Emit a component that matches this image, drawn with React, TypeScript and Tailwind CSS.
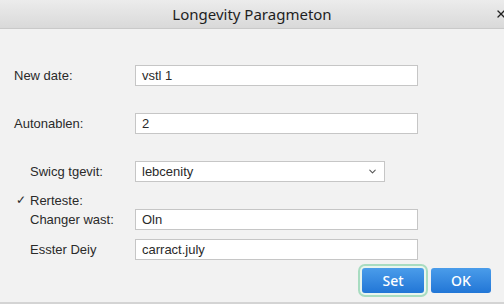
import { ChevronDown, X } from "lucide-react";

type FieldRowProps = {
  label: string;
  value: string;
  indent?: boolean;
  className?: string;
};

function FieldRow({ label, value, indent, className }: FieldRowProps) {
  return (
    <div className={`flex items-center ${className ?? ""}`}>
      <div className={`w-[135px] shrink-0 ${indent ? "pl-[30px]" : "pl-[14px]"}`}>
        {label}
      </div>
      <div className="flex h-[21px] w-[283px] items-center border border-[#c6c6c6] bg-white px-[6px] leading-none">
        {value}
      </div>
    </div>
  );
}

export default function App() {
  return (
    <div className="flex h-[304px] w-[504px] flex-col overflow-hidden bg-[#f2f2f2] font-['Liberation_Sans',Arial,sans-serif] text-[13px] text-[#2a2a2a]">
      <div className="grid h-[29px] shrink-0 grid-cols-[1fr_auto_1fr] items-center border-b border-[#c9c9c9] bg-gradient-to-b from-[#ececec] to-[#d9d9d9]">
        <div />
        <div className="font-['Noto_Sans',sans-serif] text-[15px] text-[#1e1e1e]">
          Longevity Paragmeton
        </div>
        <div className="-mr-[3px] flex justify-end">
          <X className="size-[12px] text-[#222]" strokeWidth={2.5} />
        </div>
      </div>

      <div className="flex flex-1 flex-col border-b-2 border-[#d4d4d4]">
        <FieldRow label="New date:" value="vstl 1" className="mt-[36px]" />
        <FieldRow label="Autonablen:" value="2" className="mt-[27px]" />

        <div className="mt-[27px] flex items-center">
          <div className="w-[135px] shrink-0 pl-[30px]">Swicg tgevit:</div>
          <div className="flex h-[21px] w-[250px] items-center justify-between border border-[#c6c6c6] bg-white pl-[6px] pr-[6px] leading-none">
            <span>lebcenity</span>
            <ChevronDown className="size-[11px] text-[#555]" strokeWidth={2.25} />
          </div>
        </div>

        <div className="mt-[11px] flex h-[14px] items-center leading-none">
          <span className="w-[30px] pl-[16px] text-[12px]">✓</span>
          <span>Rerteste:</span>
        </div>

        <FieldRow label="Changer wast:" value="Oln" indent className="mt-[2px]" />
        <FieldRow label="Esster Deiy" value="carract.july" indent className="mt-[9px]" />

        <div className="mt-[8px] flex justify-end gap-[7px] pr-[13px]">
          <button
            type="button"
            className="h-[25px] w-[62px] rounded-[3px] bg-gradient-to-b from-[#4a9cea] to-[#2176d6] font-['Noto_Sans',sans-serif] text-[14px] font-medium text-white shadow-[0_0_0_2px_#e9f5ee,0_0_0_4px_#a8dcc1]"
          >
            Set
          </button>
          <button
            type="button"
            className="h-[25px] w-[60px] rounded-[3px] bg-gradient-to-b from-[#4a9cea] to-[#2176d6] font-['Noto_Sans',sans-serif] text-[14px] font-medium text-white"
          >
            OK
          </button>
        </div>
      </div>
    </div>
  );
}
